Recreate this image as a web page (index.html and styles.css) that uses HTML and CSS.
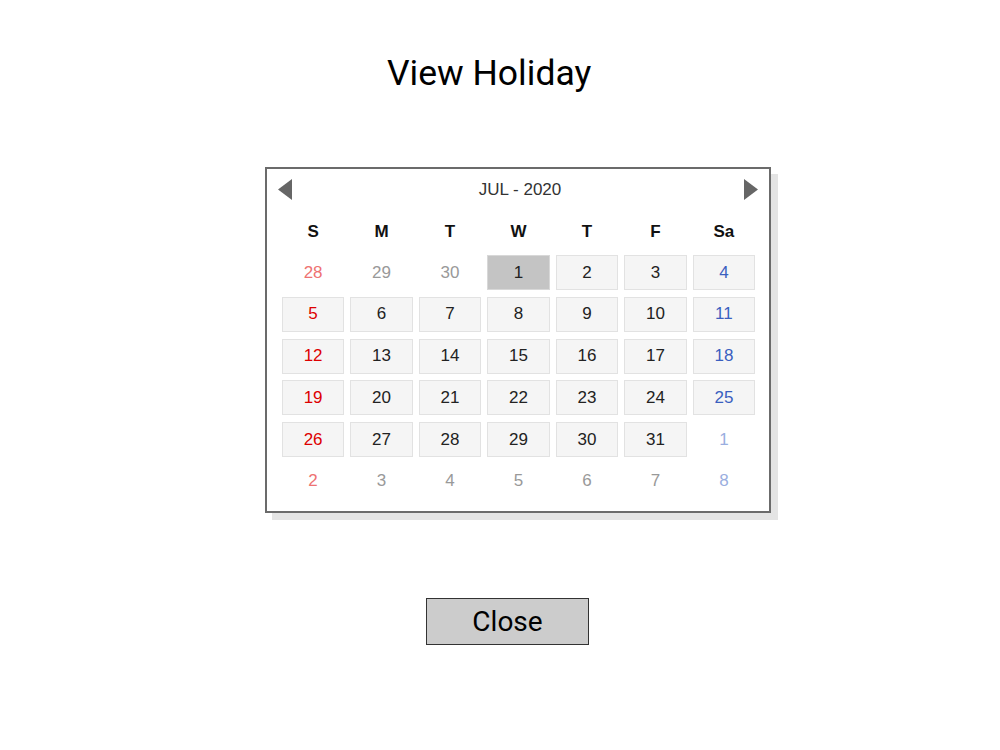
FILE: index.html
```html
<!DOCTYPE html>
<html>
<head>
<meta charset="utf-8">
<link rel="stylesheet" href="styles.css">
</head>
<body>
<h1 class="title">View Holiday</h1>
<div class="calendar">
  <div class="cal-head">
    <svg class="arrow" width="14" height="21" viewBox="0 0 14 21"><polygon points="14,0 14,21 0,10.5" fill="#666"/></svg>
    <span class="month">JUL - 2020</span>
    <svg class="arrow" width="14" height="21" viewBox="0 0 14 21"><polygon points="0,0 0,21 14,10.5" fill="#666"/></svg>
  </div>
  <div class="weekdays">
    <span>S</span><span>M</span><span>T</span><span>W</span><span>T</span><span>F</span><span>Sa</span>
  </div>
  <div class="days">
    <span class="d out sun">28</span><span class="d out">29</span><span class="d out">30</span><span class="d cell sel">1</span><span class="d cell">2</span><span class="d cell">3</span><span class="d cell sat">4</span>
    <span class="d cell sun">5</span><span class="d cell">6</span><span class="d cell">7</span><span class="d cell">8</span><span class="d cell">9</span><span class="d cell">10</span><span class="d cell sat">11</span>
    <span class="d cell sun">12</span><span class="d cell">13</span><span class="d cell">14</span><span class="d cell">15</span><span class="d cell">16</span><span class="d cell">17</span><span class="d cell sat">18</span>
    <span class="d cell sun">19</span><span class="d cell">20</span><span class="d cell">21</span><span class="d cell">22</span><span class="d cell">23</span><span class="d cell">24</span><span class="d cell sat">25</span>
    <span class="d cell sun">26</span><span class="d cell">27</span><span class="d cell">28</span><span class="d cell">29</span><span class="d cell">30</span><span class="d cell">31</span><span class="d out sat">1</span>
    <span class="d out sun">2</span><span class="d out">3</span><span class="d out">4</span><span class="d out">5</span><span class="d out">6</span><span class="d out">7</span><span class="d out sat">8</span>
  </div>
</div>
<div class="actions">
  <button class="close-btn">Close</button>
</div>
</body>
</html>
```

FILE: styles.css
```css
html, body {
  margin: 0;
  padding: 0;
  background: #fff;
}
body {
  width: 1000px;
  height: 750px;
  font-family: "Liberation Sans", Arial, sans-serif;
}
.title {
  margin: 53px 0 0 0;
  padding-left: 387px;
  font-family: Roboto, "Liberation Sans", sans-serif;
  font-weight: 400;
  font-size: 35.5px;
  line-height: 40px;
  color: #000;
}
.calendar {
  margin: 74px 0 0 265px;
  border: 2px solid #6b6b6b;
  box-shadow: 7px 7px 0 #e4e4e4;
  background: #fff;
  padding: 10px 14px 0 15px;
  box-sizing: content-box;
  width: 473px;
  height: 332px;
}
.cal-head {
  display: flex;
  align-items: center;
  justify-content: space-between;
  height: 21px;
  margin: 0 -3px 0 -4px;
}
.arrow {
  display: block;
}
.month {
  font-size: 17px;
  color: #333;
  line-height: 21px;
  margin-left: 4px;
}
.weekdays {
  display: grid;
  grid-template-columns: repeat(7, 1fr);
  column-gap: 6.3px;
  margin-top: 22px;
  height: 20px;
  line-height: 20px;
  font-size: 17px;
  font-weight: bold;
  color: #111;
  text-align: center;
}
.days {
  display: grid;
  grid-template-columns: repeat(7, 1fr);
  grid-auto-rows: 35px;
  column-gap: 6.3px;
  row-gap: 6.8px;
  margin-top: 13px;
}
.d {
  display: flex;
  align-items: center;
  justify-content: center;
  font-size: 17px;
  color: #222;
  box-sizing: border-box;
}
.cell {
  background: #f5f5f5;
  border: 1px solid #e2e2e2;
}
.cell.sel {
  background: #c4c4c4;
  border-color: #d8d8d8;
}
.sun {
  color: #dd0000;
}
.sat {
  color: #3a5fc0;
}
.out {
  color: #999;
}
.out.sun {
  color: #ee7272;
}
.out.sat {
  color: #9aaee0;
}
.actions {
  margin: 85px 0 0 426px;
}
.close-btn {
  display: flex;
  align-items: center;
  justify-content: center;
  width: 163px;
  height: 47px;
  padding: 0;
  margin: 0;
  background: #cccccc;
  border: 1px solid #333;
  font-family: Roboto, "Liberation Sans", sans-serif;
  font-size: 28px;
  color: #000;
  box-sizing: border-box;
}
```
